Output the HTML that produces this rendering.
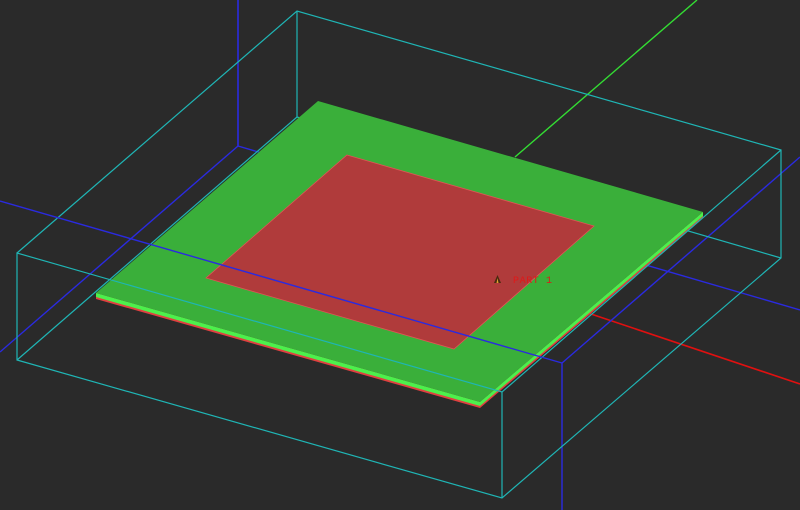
<!DOCTYPE html>
<html><head><style>html,body{margin:0;padding:0;background:#2a2a2a;overflow:hidden}svg{display:block}</style></head>
<body>
<svg width="800" height="510" viewBox="0 0 800 510" xmlns="http://www.w3.org/2000/svg">
<rect width="800" height="510" fill="#2a2a2a"/>
<g fill="none" stroke-width="1.2">
<line x1="697" y1="0" x2="515" y2="157" stroke="#33dd33" stroke-width="1.4"/>
<line x1="585" y1="312" x2="800" y2="384" stroke="#e01010" stroke-width="1.6"/>
<line x1="238" y1="0" x2="238" y2="146" stroke="#2a2ae0" stroke-width="1.6"/>
<line x1="238" y1="146" x2="0" y2="352" stroke="#2a2ae0" stroke-width="1.4"/>
<line x1="238" y1="146" x2="800" y2="310" stroke="#2a2ae0" stroke-width="1.4"/>
<line x1="562" y1="363" x2="800" y2="157" stroke="#2a2ae0" stroke-width="1.4"/>
<line x1="562" y1="363" x2="562" y2="510" stroke="#2a2ae0" stroke-width="1.4"/>
<line x1="297" y1="11" x2="297" y2="117" stroke="#1fb5b5"/>
<line x1="297" y1="117" x2="17" y2="360" stroke="#1fb5b5"/>
<line x1="297" y1="117" x2="781" y2="258" stroke="#1fb5b5"/>
</g>
<polygon points="96,293 480,402 703,212 703,218 480,408 96,299" fill="#e04040"/>
<polygon points="96,293 480,402 703,212 703,216 480,406 96,297" fill="#4cf04c"/>
<polygon points="318,101 703,212 480,402 96,293" fill="#3aaf3a"/>
<polygon points="347,155 594,226 454,349 206,278" fill="#b03b3b" stroke="#e05555" stroke-width="0.8"/>
<g fill="none" stroke="#1fb5b5" stroke-width="1.2">
<polyline points="17,253 297,11 781,150 781,258 502,498 17,360 17,253 502,392 781,150"/>
<line x1="502" y1="392" x2="502" y2="498"/>
</g>
<line x1="0" y1="201" x2="562" y2="363" stroke="#2a2ae0" stroke-width="1.4"/>
<path d="M494,283 L497.5,275 L501,283 Z" fill="#4a2a10"/>
<path d="M496.5,283 L497.5,278 L498.5,283 Z" fill="#e0a030"/>
<text x="513" y="283" font-family="Liberation Mono, monospace" font-size="10" letter-spacing="0.6" fill="#e01818">PART 1</text>
</svg>
</body></html>
